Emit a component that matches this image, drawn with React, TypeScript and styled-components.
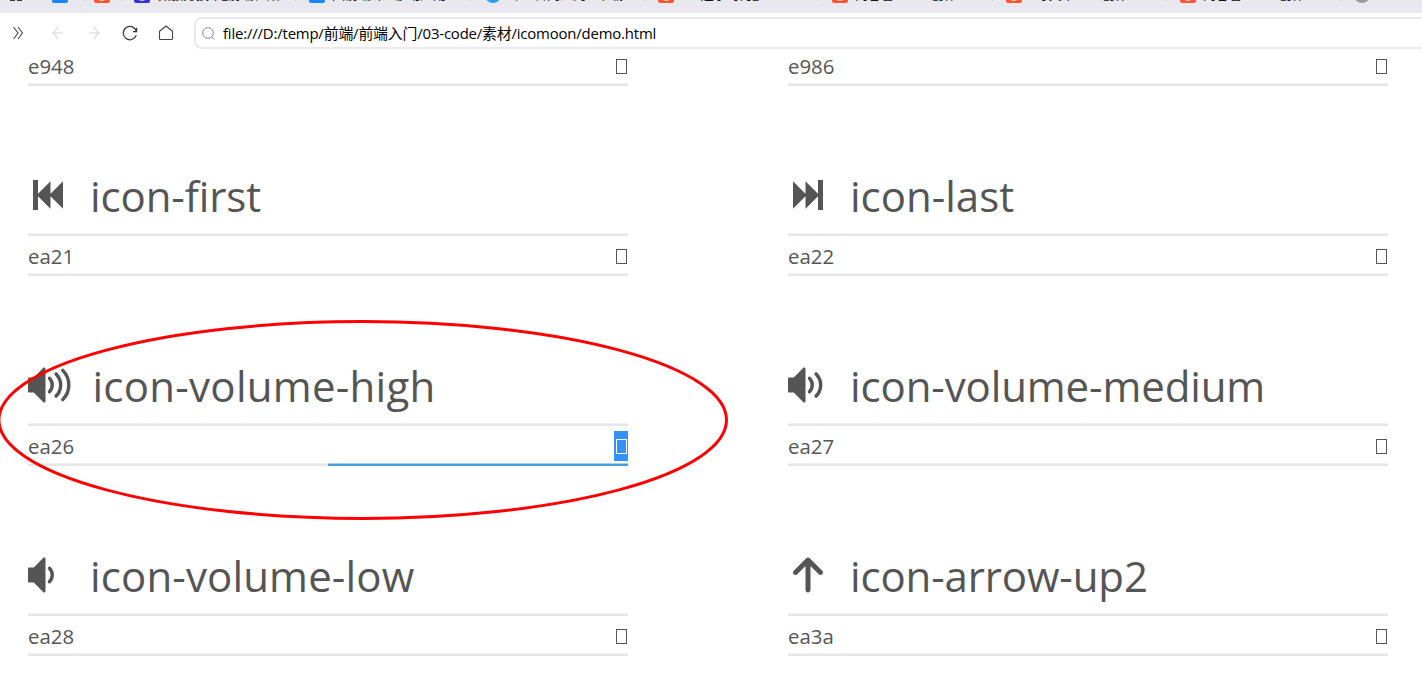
import React from "react";
import styled, { createGlobalStyle } from "styled-components";

const GlobalStyle = createGlobalStyle`
  *, *::before, *::after { box-sizing: border-box; }
  html, body { margin: 0; padding: 0; background: #fff; overflow: hidden; }
`;

const Window = styled.div`
  position: relative;
  width: 1422px;
  height: 677px;
  overflow: hidden;
  background: #fff;
  color: #555;
  font-family: "Open Sans", "Noto Sans CJK SC", sans-serif;
`;

const TabStrip = styled.div`
  height: 13px;
  overflow: hidden;
  background: #e8e8ee;
`;

const TabRow = styled.div`
  display: flex;
  align-items: flex-end;
  height: 23px;
  margin-top: -20px;
`;

const Tab = styled.div<{ $width: number; $pad: number; $last?: boolean }>`
  display: flex;
  flex: none;
  align-items: flex-end;
  width: ${(p) => p.$width}px;
  height: 23px;
  padding-left: ${(p) => p.$pad}px;
  position: relative;
  &::after {
    content: "";
    display: ${(p) => (p.$last ? "none" : "block")};
    position: absolute;
    right: 0;
    bottom: 2px;
    width: 1px;
    height: 14px;
    background: #c4c4ca;
  }
`;

const Favicon = styled.span<{ $color: string; $round?: boolean; $plain?: boolean }>`
  display: flex;
  justify-content: center;
  align-items: flex-end;
  flex: none;
  width: 16px;
  height: 16px;
  border-radius: ${(p) => (p.$round ? "8px" : "0 0 2px 2px")};
  background: ${(p) => p.$color};
  &::after {
    content: "";
    display: ${(p) => (p.$round || p.$plain ? "none" : "block")};
    width: 8px;
    height: 8px;
    margin-bottom: 2px;
    border-radius: 0 0 4px 4px;
    background: rgba(255, 255, 255, 0.75);
  }
`;

const TabLabel = styled.span`
  margin-left: 7px;
  height: 18px;
  font: 13px/18px "Open Sans", "Noto Sans CJK SC", sans-serif;
  color: #111;
  white-space: pre;
`;

const PinnedGlyph = styled.span`
  display: flex;
  gap: 2px;
  height: 4px;
  &::before, &::after {
    content: "";
    width: 5px;
    height: 2px;
    background: #333;
  }
`;

const Toolbar = styled.div`
  display: flex;
  height: 36px;
  padding: 4px 0 0 8px;
`;

const NavButton = styled.div<{ $width: number }>`
  display: flex;
  flex: none;
  align-items: center;
  justify-content: center;
  width: ${(p) => p.$width}px;
  height: 32px;
  svg { flex: none; }
`;

const NavButtons = styled.div`
  display: flex;
  flex: none;
  width: 186px;
`;

const AddressBar = styled.div`
  display: flex;
  align-items: center;
  flex: none;
  width: 1240px;
  height: 32px;
  padding-left: 6px;
  border: 2px solid #e8e8ee;
  border-radius: 8px;
  color: #000;
`;

const Url = styled.span`
  margin-left: 8px;
  font: 14.9px/20px "Open Sans", "Noto Sans CJK SC", sans-serif;
  letter-spacing: -0.17px;
  white-space: nowrap;
`;

const Content = styled.main`
  display: grid;
  grid-template-columns: 600px 600px;
  column-gap: 160px;
  padding-left: 28px;
`;

const Glyph = styled.section<{ $first?: boolean }>`
  height: ${(p) => (p.$first ? 37 : 190)}px;
  padding-top: ${(p) => (p.$first ? 0 : 80)}px;
`;

const Heading = styled.div`
  display: flex;
  height: 67px;
`;

const GlyphIcon = styled.svg`
  flex: none;
  height: 40px;
  margin-top: 8.5px;
  fill: #555;
  overflow: visible;
`;

const Name = styled.span<{ $spacing: number }>`
  margin-left: 22px;
  font-size: 42px;
  line-height: 60px;
  letter-spacing: ${(p) => p.$spacing}px;
  white-space: nowrap;
`;

const Rule = styled.div<{ $half?: boolean }>`
  height: 3px;
  border-top: 1px solid #f2f2f2;
  background: #e6e6e6;
  &::after {
    content: "";
    display: ${(p) => (p.$half ? "block" : "none")};
    height: 3px;
    margin: -1px 0 0 300px;
    border-top: 1px solid #a8cfed;
    background: #459fdc;
    background-clip: padding-box;
  }
`;

const CodeRow = styled.div<{ $first?: boolean }>`
  display: flex;
  justify-content: space-between;
  height: ${(p) => (p.$first ? 34 : 37)}px;
  padding-top: ${(p) => (p.$first ? 2 : 5)}px;
`;

const Code = styled.span`
  font-size: 20.4px;
  line-height: 30px;
`;

const CharBox = styled.span<{ $selected?: boolean }>`
  display: flex;
  align-items: center;
  justify-content: center;
  width: 14px;
  height: 30px;
  color: ${(p) => (p.$selected ? "#fff" : "#555")};
  background: ${(p) => (p.$selected ? "#3390ff" : "transparent")};
  &::after {
    content: "";
    width: 11px;
    height: 15px;
    margin-top: 1px;
    border: 1px solid currentColor;
  }
`;

const Marker = styled.svg`
  position: absolute;
  left: 0;
  top: 310px;
  pointer-events: none;
`;

const SPEAKER =
  "M416.006 960c-8.328 0-16.512-3.25-22.634-9.374l-246.626-246.626h-114.746c-17.672 0-32-14.326-32-32v-320c0-17.672 14.328-32 32-32h114.746l246.626-246.628c9.154-9.154 22.916-11.89 34.874-6.936 11.958 4.952 19.754 16.622 19.754 29.564v832c0 12.944-7.796 24.612-19.754 29.564-3.958 1.64-8.118 2.436-12.24 2.436z";

const WAVES = [
  "M549 340A243 243 0 0 1 549 684",
  "M719.5 228.5A401 401 0 0 1 719.5 795.5",
  "M890 138A529 529 0 0 1 890 886",
];

const SHAPES: Record<string, string> = {
  first:
    "M128 896v-768h128v352l320-320v320l320-320v704l-320-320v320l-320-320v352z",
  last: "M896 128v768h-128v-352l-320 320v-320l-320 320v-704l320 320v-320l320 320v-352z",
  up: "M877.254 402.746l-320-320c-24.994-24.994-65.516-24.994-90.51 0l-320 320c-24.994 24.994-24.994 65.516 0 90.51s65.516 24.994 90.508 0l210.746-210.744v613.488c0 35.346 28.654 64 64 64s64-28.654 64-64v-613.488l210.746 210.746c12.496 12.496 28.876 18.744 45.254 18.744s32.758-6.248 45.254-18.746c24.994-24.994 24.994-65.514 0-90.51z",
};

type Item = {
  name: string;
  code: string;
  shape?: string;
  waves?: number;
  spacing: number;
  selected?: boolean;
};

const ITEMS: Item[] = [
  { name: "icon-first", code: "ea21", shape: "first", spacing: -0.1 },
  { name: "icon-last", code: "ea22", shape: "last", spacing: 0 },
  { name: "icon-volume-high", code: "ea26", waves: 3, spacing: 0.27, selected: true },
  { name: "icon-volume-medium", code: "ea27", waves: 2, spacing: -0.12 },
  { name: "icon-volume-low", code: "ea28", waves: 1, spacing: 0.14 },
  { name: "icon-arrow-up2", code: "ea3a", shape: "up", spacing: -0.14 },
];

function ItemIcon({ item }: { item: Item }) {
  const units = item.waves === 3 ? 1088 : 1024;
  return (
    <GlyphIcon viewBox={`0 0 ${units} 1024`} width={(units * 40) / 1024}>
      <path d={item.shape ? SHAPES[item.shape] : SPEAKER} />
      {WAVES.slice(0, item.waves ?? 0).map((d) => (
        <path key={d} d={d} fill="none" stroke="#555" strokeWidth="88" strokeLinecap="round" />
      ))}
    </GlyphIcon>
  );
}

const TABS = [
  { width: 43, pad: 10, color: "", label: "" },
  { width: 42, pad: 9, color: "#1989fa", label: "", plain: true },
  { width: 37, pad: 9, color: "#fc5531", label: "" },
  { width: 174, pad: 12, color: "#3a32d8", label: "微服务技术_前端框架" },
  { width: 175, pad: 13, color: "#1989fa", label: "大前端课 · 移动应用", plain: true },
  { width: 174, pad: 14, color: "#2b9df0", label: "哔哩官网入门 - 下载", round: true },
  { width: 174, pad: 13, color: "#fc5531", label: "  一起学习力_     " },
  { width: 174, pad: 13, color: "#fc5531", label: "内容管理       创作" },
  { width: 174, pad: 13, color: "#fc5531", label: "  写文章        创作" },
  { width: 174, pad: 13, color: "#fc5531", label: "内容管理       创作" },
  { width: 81, pad: 13, color: "#9a9da0", label: "", round: true, last: true },
];

export default function App() {
  return (
    <>
      <GlobalStyle />
      <Window>
        <TabStrip>
          <TabRow>
            {TABS.map((tab, i) => (
              <Tab key={i} $width={tab.width} $pad={tab.pad} $last={tab.last || i < 1}>
                {tab.color ? (
                  <Favicon $color={tab.color} $round={tab.round} $plain={tab.plain} />
                ) : (
                  <PinnedGlyph />
                )}
                {tab.label && <TabLabel>{tab.label}</TabLabel>}
              </Tab>
            ))}
          </TabRow>
        </TabStrip>
        <Toolbar>
          <NavButtons>
            <NavButton $width={20}>
              <svg width="12" height="14" viewBox="0 0 12 14" fill="none" stroke="#444" strokeWidth="1.1">
                <path d="M1.500 1L6 7l-4.500 6M6 1l4.500 6L6 13" />
              </svg>
            </NavButton>
            <NavButton $width={60}>
              <svg width="12" height="14" viewBox="0 0 12 14" fill="none" stroke="#d3d3d3" strokeWidth="1.1">
                <path d="M11 7H1M6.500 1L1 7l5.500 6" />
              </svg>
            </NavButton>
            <NavButton $width={12}>
              <svg width="12" height="14" viewBox="0 0 12 14" fill="none" stroke="#d3d3d3" strokeWidth="1.1">
                <path d="M1 7h10M5.500 1L11 7l-5.500 6" />
              </svg>
            </NavButton>
            <NavButton $width={60}>
              <svg width="16" height="16" viewBox="0 0 16 16" fill="none" stroke="#333" strokeWidth="1.2">
                <path d="M14.500 6.500A6.700 6.700 0 1 0 14.300 10.300M14.600 2.800v3.900h-3.600" />
              </svg>
            </NavButton>
            <NavButton $width={12}>
              <svg width="16" height="16" viewBox="0 0 16 16" fill="none" stroke="#444" strokeWidth="1.1" strokeLinejoin="round">
                <path d="M1.500 6.200L8 1l6.500 5.200v7.300a1 1 0 0 1-1 1h-11a1 1 0 0 1-1-1z" />
              </svg>
            </NavButton>
          </NavButtons>
          <AddressBar>
            <svg width="13" height="13" viewBox="0 0 13 13" fill="none" stroke="#888" strokeWidth="1">
              <circle cx="6" cy="6" r="5.300" />
              <path d="M10 10l2.500 2.500" />
            </svg>
            <Url>file:///D:/temp/前端/前端入门/03-code/素材/icomoon/demo.html</Url>
          </AddressBar>
        </Toolbar>
        <Content>
          {["e948", "e986"].map((code) => (
            <Glyph key={code} $first>
              <CodeRow $first>
                <Code>{code}</Code>
                <CharBox />
              </CodeRow>
              <Rule />
            </Glyph>
          ))}
          {ITEMS.map((item) => (
            <Glyph key={item.name}>
              <Heading>
                <ItemIcon item={item} />
                <Name $spacing={item.spacing}>{item.name}</Name>
              </Heading>
              <Rule />
              <CodeRow>
                <Code>{item.code}</Code>
                <CharBox $selected={item.selected} />
              </CodeRow>
              <Rule $half={item.selected} />
            </Glyph>
          ))}
        </Content>
        <Marker width="740" height="220" viewBox="0 310 740 220" fill="none">
          <ellipse cx="362.700" cy="420" rx="363.800" ry="98.400" stroke="#f00" strokeWidth="3" />
        </Marker>
      </Window>
    </>
  );
}
